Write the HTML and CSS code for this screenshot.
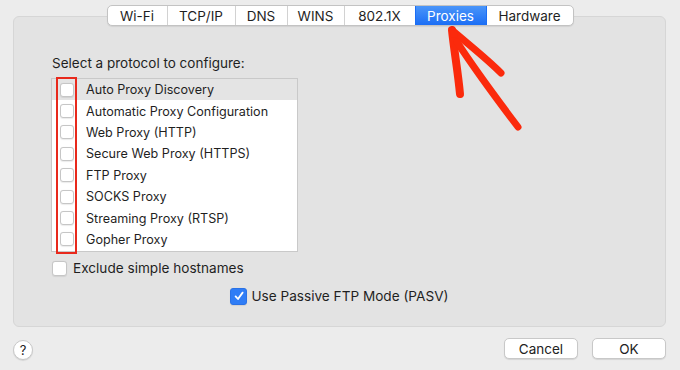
FILE: index.html
```html
<!DOCTYPE html>
<html lang="en">
<head>
  <meta charset="UTF-8">
  <title>Network — Proxies</title>
  <link rel="stylesheet" href="styles.css">
</head>
<body>
  <div class="window">
    <nav class="tabs">
      <div class="tab">Wi-Fi</div>
      <div class="tab">TCP/IP</div>
      <div class="tab">DNS</div>
      <div class="tab">WINS</div>
      <div class="tab">802.1X</div>
      <div class="tab active">Proxies</div>
      <div class="tab">Hardware</div>
    </nav>

    <div class="panel">
      <p class="prompt">Select a protocol to configure:</p>

      <ul class="protocols">
        <li class="selected"><span class="box"></span>Auto Proxy Discovery</li>
        <li><span class="box"></span>Automatic Proxy Configuration</li>
        <li><span class="box"></span>Web Proxy (HTTP)</li>
        <li><span class="box"></span>Secure Web Proxy (HTTPS)</li>
        <li><span class="box"></span>FTP Proxy</li>
        <li><span class="box"></span>SOCKS Proxy</li>
        <li><span class="box"></span>Streaming Proxy (RTSP)</li>
        <li><span class="box"></span>Gopher Proxy</li>
      </ul>

      <label class="option"><span class="box"></span>Exclude simple hostnames</label>

      <label class="option passive">
        <span class="box checked">
          <svg viewBox="0 0 14 14" width="14" height="14"><path d="M3.6 7.4 L6 10 L10.6 3.6" fill="none" stroke="#fff" stroke-width="1.8" stroke-linecap="round" stroke-linejoin="round"/></svg>
        </span>Use Passive FTP Mode (PASV)
      </label>
    </div>

    <div class="actions">
      <button class="help">?</button>
      <div class="buttons">
        <button class="btn">Cancel</button>
        <button class="btn">OK</button>
      </div>
    </div>
  </div>

  <!-- annotation -->
  <div class="mark"></div>
  <svg class="arrow" width="680" height="370" viewBox="0 0 680 370">
    <g fill="none" stroke="#fb2a0c" stroke-linecap="round" stroke-linejoin="round">
      <path d="M452 30 C454 50 458 72 460 94" stroke-width="8"/>
      <path d="M453 31 C468 44 486 58 501 73" stroke-width="7"/>
      <path d="M457 42 C474 68 496 98 518 127" stroke-width="7"/>
      <circle cx="454" cy="34" r="4" fill="#fb2a0c" stroke="none"/>
    </g>
  </svg>
</body>
</html>
```

FILE: styles.css
```css
:root {
  --window-bg: #ececec;
  --panel-bg: #e3e3e3;
  --panel-border: #d6d6d6;
  --control-border: #c3c3c3;
  --accent: #2f7df6;
  --text: #1f1f1f;
}

body {
  margin: 0;
  background: var(--window-bg);
  font-family: Inter, "Liberation Sans", sans-serif;
  font-size: 12.5px;
  color: var(--text);
}

.window {
  position: relative;
  height: 370px;
  box-sizing: border-box;
  padding: 5px 14px 0 13px;
  display: flex;
  flex-direction: column;
}

/* segmented tabs */
.tabs {
  position: relative;
  z-index: 1;
  align-self: center;
  display: flex;
  height: 21px;
  margin-bottom: -10px;
  margin-left: 1px;
  background: #fff;
  border: 1px solid var(--control-border);
  border-radius: 5px;
  box-shadow: 0 1px 1px rgba(0, 0, 0, 0.08);
  box-sizing: border-box;
  overflow: hidden;
}

.tab {
  display: flex;
  align-items: center;
  justify-content: center;
  font-size: 13.5px;
  border-left: 1px solid #d2d2d2;
  box-sizing: border-box;
}

.tab:first-child { border-left: none; width: 59px; }
.tab:nth-child(2) { width: 68px; }
.tab:nth-child(3) { width: 52px; }
.tab:nth-child(4) { width: 57px; }
.tab:nth-child(5) { width: 71px; }
.tab:nth-child(6) { width: 71px; }
.tab:nth-child(7) { width: 87px; }

.tab.active {
  background: linear-gradient(#4a95f9, #1b6ef5);
  color: #fff;
  border-left-color: #1b6ef5;
}

.tab.active + .tab {
  border-left-color: #1b6ef5;
}

/* content box */
.panel {
  height: 311px;
  box-sizing: border-box;
  background: var(--panel-bg);
  border: 1px solid var(--panel-border);
  border-radius: 6px;
  padding: 38px 0 0 38px;
  display: flex;
  flex-direction: column;
}

.prompt {
  margin: 0;
  line-height: 16px;
  font-size: 13.5px;
}

.protocols {
  list-style: none;
  margin: 7px 0 0 -1px;
  padding: 0 0 1px;
  width: 247px;
  background: #fff;
  border: 1px solid #c9c9c9;
  box-sizing: border-box;
}

.protocols li {
  height: 21.4px;
  display: flex;
  align-items: center;
  padding-left: 8px;
  gap: 12px;
  font-size: 12.6px;
}

.protocols li.selected {
  background: #e4e4e4;
}

.box {
  width: 12px;
  height: 12px;
  flex: none;
  background: #fff;
  border: 1px solid #c6c6c6;
  border-radius: 3px;
  box-shadow: 0 0.5px 1px rgba(0, 0, 0, 0.08);
}

.option {
  display: flex;
  align-items: center;
  gap: 6px;
  height: 16px;
  margin-top: 8px;
  font-size: 13.6px;
}

.option .box {
  width: 13px;
  height: 13px;
}

.option.passive {
  margin-top: 12px;
  justify-content: center;
  margin-left: -38px;
  gap: 4px;
}

.box.checked {
  width: 15px;
  height: 15px;
  background: var(--accent);
  border-color: #2a72e6;
  display: flex;
  align-items: center;
  justify-content: center;
}

/* bottom buttons */
.actions {
  display: flex;
  justify-content: space-between;
  align-items: center;
  margin-top: 11px;
  height: 21px;
}

.help {
  width: 20px;
  height: 20px;
  padding: 0;
  border-radius: 50%;
  border: 1px solid #c8c8c8;
  background: #fff;
  font-family: inherit;
  font-size: 13px;
  color: #222;
  box-shadow: 0 1px 1px rgba(0, 0, 0, 0.1);
  margin-top: 2px;
}

.buttons {
  display: flex;
  gap: 14px;
}

.btn {
  width: 74px;
  height: 21px;
  padding: 0;
  background: #fff;
  border: 1px solid #c8c8c8;
  border-radius: 5px;
  font-family: inherit;
  font-size: 13.5px;
  color: #222;
  box-shadow: 0 1px 1px rgba(0, 0, 0, 0.1);
}

/* red annotation overlay */
.mark {
  position: absolute;
  left: 56px;
  top: 77px;
  width: 21px;
  height: 177px;
  box-sizing: border-box;
  border: 2px solid #e8291c;
}

.arrow {
  position: absolute;
  left: 0;
  top: 0;
  pointer-events: none;
}
```
